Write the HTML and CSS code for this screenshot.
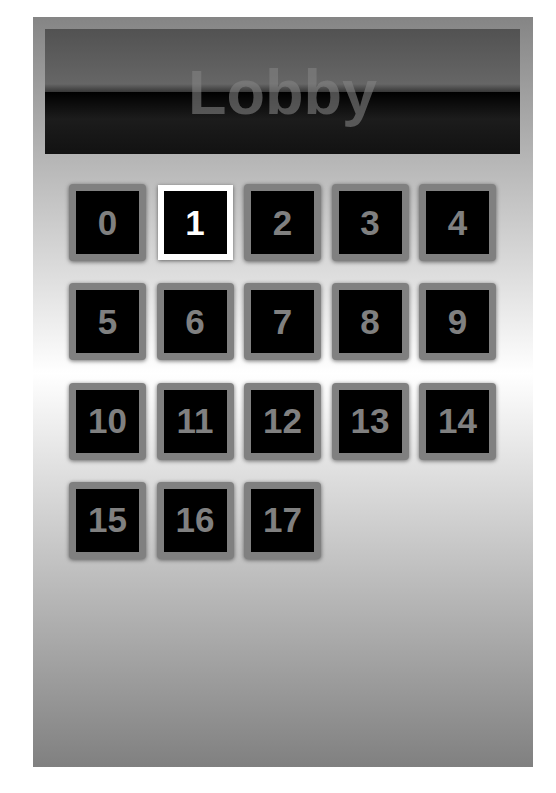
FILE: index.html
```html
<!DOCTYPE html>
<html>
<head>
<meta charset="utf-8">
<link rel="stylesheet" href="styles.css">
</head>
<body>
<div class="page">
  <div class="lobby">
    <div class="header"><span class="title">Lobby</span></div>
    <div class="rooms">
      <div class="room">0</div>
      <div class="room selected">1</div>
      <div class="room">2</div>
      <div class="room">3</div>
      <div class="room">4</div>
      <div class="room">5</div>
      <div class="room">6</div>
      <div class="room">7</div>
      <div class="room">8</div>
      <div class="room">9</div>
      <div class="room">10</div>
      <div class="room">11</div>
      <div class="room">12</div>
      <div class="room">13</div>
      <div class="room">14</div>
      <div class="room">15</div>
      <div class="room">16</div>
      <div class="room">17</div>
    </div>
  </div>
</div>
</body>
</html>
```
FILE: styles.css
```css
html, body {
  margin: 0;
  padding: 0;
  background: #fff;
}
.page {
  padding: 17px 0 0 33px;
}
.lobby {
  box-sizing: border-box;
  width: 500px;
  height: 750px;
  padding: 12px 13px 0 12px;
  background: linear-gradient(#858585 0%, #ffffff 47.5%, #808080 100%);
  font-family: "Liberation Sans", Arial, sans-serif;
}
.header {
  height: 125px;
  display: flex;
  align-items: center;
  justify-content: center;
  background: linear-gradient(#525252 0%, #666666 44%, #3a3a3a 50%, #000000 50.2%, #1c1c1c 72%, #121212 100%);
}
.title {
  font-size: 63px;
  font-weight: bold;
  color: rgba(130, 130, 130, 0.6);
  line-height: 1;
  margin-top: 2px;
}
.rooms {
  display: flex;
  flex-wrap: wrap;
  column-gap: 10.5px;
  row-gap: 22.3px;
  padding: 30px 0 0 24px;
  width: 430px;
}
.room {
  box-sizing: border-box;
  width: 77px;
  height: 77px;
  border: 7px solid #808080;
  border-radius: 4px;
  background: #000;
  color: #808080;
  font-size: 35px;
  font-weight: bold;
  display: flex;
  align-items: center;
  justify-content: center;
  box-shadow: 0 1px 4px rgba(0, 0, 0, 0.55);
}
.room.selected {
  width: 75px;
  height: 75px;
  margin: 1px;
  border: 6px solid #fff;
  border-radius: 0;
  color: #fff;
}
```
